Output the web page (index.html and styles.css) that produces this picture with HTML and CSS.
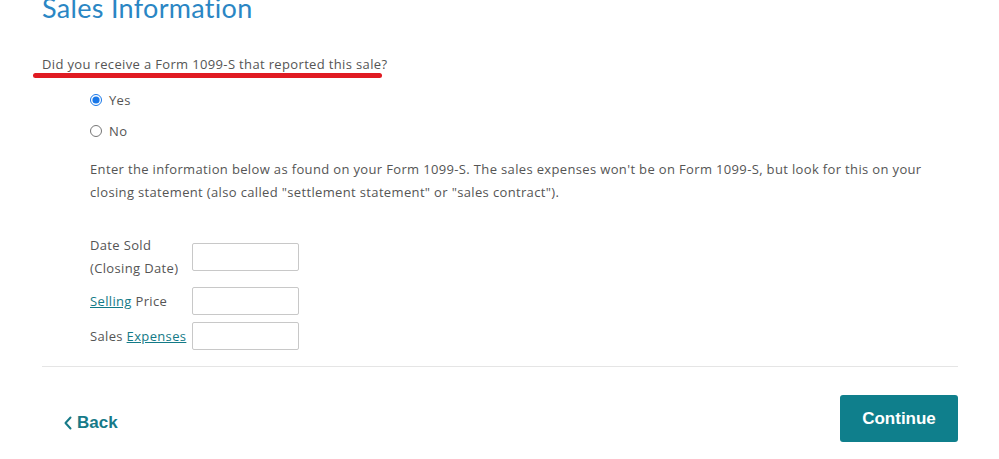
FILE: index.html
```html
<!DOCTYPE html>
<html lang="en">
<head>
    <meta charset="UTF-8">
    <meta name="viewport" content="width=device-width, initial-scale=1.0">
    <title>Sales Information</title>
    <link rel="stylesheet" href="styles.css">
</head>
<body>
    <div class="page">
        <h1>Sales Information</h1>

        <p class="question"><span class="marked">Did you receive a Form 1099-S that reported this sale</span>?</p>

        <div class="options">
            <label class="option"><input type="radio" name="got1099s" value="yes" checked> Yes</label>
            <label class="option"><input type="radio" name="got1099s" value="no"> No</label>
        </div>

        <p class="intro">Enter the information below as found on your Form 1099-S. The sales expenses won't be on Form 1099-S, but look for this on your closing statement (also called "settlement statement" or "sales contract").</p>

        <form class="fields">
            <label for="date-sold" class="field-label">Date Sold<br>(Closing Date)</label>
            <input type="text" id="date-sold">
            <label for="price" class="field-label"><a href="#">Selling</a> Price</label>
            <input type="text" id="price">
            <label for="expenses" class="field-label">Sales <a href="#">Expenses</a></label>
            <input type="text" id="expenses">
        </form>

        <hr>

        <div class="actions">
            <a href="#" class="back">
                <svg width="10" height="16" viewBox="0 0 10 16"><path d="M7.5 2.5 L2.5 8 L7.5 13.5" fill="none" stroke="currentColor" stroke-width="2" stroke-linecap="round" stroke-linejoin="round"/></svg>
                Back
            </a>
            <button type="button" class="continue">Continue</button>
        </div>
    </div>
</body>
</html>
```

FILE: styles.css
```css
body {
    margin: 0;
    background: #fff;
    font-family: "Open Sans", Lato, sans-serif;
    color: #555;
    font-size: 13px;
    letter-spacing: 0.35px;
}
.page {
    width: 916px;
    margin-left: 42px;
}
h1 {
    margin: -9px 0 0;
    font-family: Lato, sans-serif;
    font-size: 27px;
    line-height: 34px;
    font-weight: 400;
    color: #2a86c4;
    letter-spacing: 0.3px;
}
.question {
    margin: 29px 0 0;
    line-height: 20px;
}
.marked {
    position: relative;
}
.marked::after {
    content: "";
    position: absolute;
    left: -9px;
    right: -1px;
    bottom: -5px;
    height: 5px;
    border-radius: 3px;
    background: #e01b22;
}
.options {
    margin: 10px 0 0 48px;
}
.option {
    display: flex;
    align-items: center;
    gap: 7px;
    height: 31px;
}
.option input {
    margin: 0;
    width: 12px;
    height: 12px;
    accent-color: #1877e8;
}
.intro {
    margin: 12px 0 0 48px;
    line-height: 23px;
    padding-right: 20px;
}
.fields {
    margin: 30px 0 0 48px;
    display: grid;
    grid-template-columns: 102px 107px;
    grid-template-rows: 46px 28px 28px;
    row-gap: 7px;
    align-items: center;
}
.field-label {
    line-height: 23px;
}
.field-label a {
    color: #137a87;
}
.fields input {
    box-sizing: border-box;
    width: 107px;
    height: 28px;
    border: 1px solid #c8c8c8;
    border-radius: 2px;
}
hr {
    margin: 16px 0 0;
    border: none;
    border-top: 1px solid #e5e5e5;
}
.actions {
    display: flex;
    justify-content: space-between;
    align-items: center;
    padding: 28px 0 0 21px;
    letter-spacing: 0;
}
.back {
    display: flex;
    align-items: center;
    gap: 4px;
    color: #167a88;
    text-decoration: none;
    font-family: "Liberation Sans", Arial, sans-serif;
    font-weight: 700;
    font-size: 17px;
    margin-top: 8px;
}
.continue {
    width: 118px;
    height: 47px;
    border: none;
    border-radius: 3px;
    background: #0f7f8c;
    color: #fff;
    font-family: "Liberation Sans", Arial, sans-serif;
    font-weight: 700;
    font-size: 17px;
}
```
